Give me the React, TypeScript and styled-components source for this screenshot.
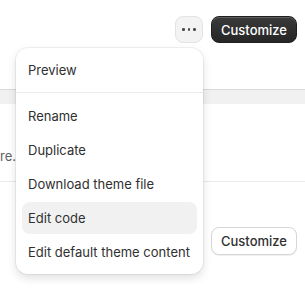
import styled, { createGlobalStyle } from 'styled-components';

const GlobalStyle = createGlobalStyle`
  html, body {
    margin: 0;
    padding: 0;
    background: #ffffff;
    font-family: Inter, "Noto Sans", sans-serif;
    color: #303030;
  }
`;

const Page = styled.div`
  position: relative;
  width: 305px;
  height: 289px;
  overflow: hidden;
  background: #ffffff;
`;

const Header = styled.div`
  display: flex;
  justify-content: flex-end;
  align-items: flex-start;
  gap: 8px;
  height: 89px;
  box-sizing: border-box;
  padding: 16px 8px 0 0;
`;

const IconButton = styled.button`
  width: 28px;
  height: 27px;
  border-radius: 8px;
  border: 1px solid #e3e3e3;
  background: #f3f3f3;
  display: flex;
  align-items: center;
  justify-content: center;
  padding: 0;
  gap: 3px;
`;

const Dot = styled.span`
  width: 2.5px;
  height: 2.5px;
  border-radius: 50%;
  background: #4a4a4a;
`;

const Button = styled.button<{ $primary?: boolean }>`
  height: ${(p) => (p.$primary ? '27px' : '28px')};
  width: 86px;
  padding: 0;
  border-radius: 8px;
  font-family: Inter, "Noto Sans", sans-serif;
  font-size: 13px;
  font-weight: 500;
  color: ${(p) => (p.$primary ? '#ffffff' : '#303030')};
  background: ${(p) => (p.$primary ? 'linear-gradient(#3a3a3a, #262626)' : '#ffffff')};
  border: 1px solid ${(p) => (p.$primary ? '#1f1f1f' : '#d6d6d6')};
  box-shadow: ${(p) => (p.$primary ? 'inset 0 1px 0 rgba(255,255,255,0.18)' : '0 1px 0 rgba(0,0,0,0.06)')};
`;

const Band = styled.div`
  height: 15px;
  background: #f1f1f1;
  border-top: 1px solid #d9d9d9;
  box-sizing: border-box;
`;

const Content = styled.div`
  display: flex;
  flex-direction: column;
`;

const Note = styled.p`
  margin: 0;
  padding-top: 44px;
  height: 77px;
  box-sizing: border-box;
  font-size: 13px;
  color: #616161;
  white-space: nowrap;
`;

const Divider = styled.div`
  height: 1px;
  background: #ebebeb;
`;

const Actions = styled.div`
  display: flex;
  justify-content: flex-end;
  gap: 8px;
  padding: 45px 8px 0 0;
`;

const Menu = styled.div`
  position: absolute;
  left: 16px;
  top: 48px;
  width: 187px;
  background: #ffffff;
  border-radius: 12px;
  box-shadow: 0 4px 10px rgba(0, 0, 0, 0.13), 0 0 0 1px rgba(0, 0, 0, 0.05);
  padding: 6px;
  box-sizing: border-box;
  display: flex;
  flex-direction: column;
`;

const Section = styled.div`
  display: flex;
  flex-direction: column;
  gap: 2px;
`;

const Separator = styled.div`
  height: 1px;
  background: #ebebeb;
  margin: 6px -6px 7px;
`;

const Item = styled.div<{ $active?: boolean }>`
  height: 32px;
  display: flex;
  align-items: center;
  padding: 0 6px;
  border-radius: 8px;
  font-size: 13px;
  color: #303030;
  background: ${(p) => (p.$active ? '#f1f1f1' : 'transparent')};
  white-space: nowrap;
`;

export default function App() {
  return (
    <Page>
      <GlobalStyle />
      <Header>
        <IconButton aria-label="More actions">
          <Dot />
          <Dot />
          <Dot />
        </IconButton>
        <Button $primary>Customize</Button>
      </Header>
      <Band />
      <Content>
        <Note>re.</Note>
        <Divider />
        <Actions>
          <IconButton aria-label="More actions">
            <Dot />
            <Dot />
            <Dot />
          </IconButton>
          <Button>Customize</Button>
        </Actions>
      </Content>
      <Menu>
        <Section>
          <Item>Preview</Item>
        </Section>
        <Separator />
        <Section>
          <Item>Rename</Item>
          <Item>Duplicate</Item>
          <Item>Download theme file</Item>
          <Item $active>Edit code</Item>
          <Item>Edit default theme content</Item>
        </Section>
      </Menu>
    </Page>
  );
}
